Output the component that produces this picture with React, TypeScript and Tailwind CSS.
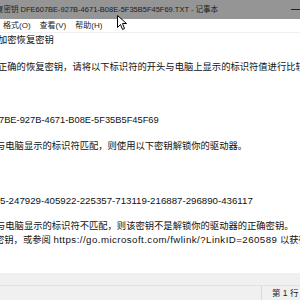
import React from "react";

const FONT = "font-['Liberation_Sans','Noto_Sans_CJK_SC',sans-serif]";

type Line = { text?: string; shift?: number; cls?: string };

// text as it shows in the cropped window (scrolled a bit to the right)
const LINES: Line[] = [
  { text: "加密恢复密钥", shift: -2 },
  {},
  { text: "正确的恢复密钥，请将以下标识符的开头与电脑上显示的标识符值进行比较。", shift: -2 },
  {},
  {},
  {},
  { text: "7BE-927B-4671-B08E-5F35B5F45F69", shift: -1, cls: "text-[9.3px]" },
  {},
  { text: "与电脑显示的标识符匹配，则使用以下密钥解锁你的驱动器。", shift: -4 },
  {},
  {},
  {},
  { text: "5-247929-405922-225357-713119-216887-296890-436117", shift: 0, cls: "text-[9.7px]" },
  {},
  { text: "与电脑显示的标识符不匹配，则该密钥不是解锁你的驱动器的正确密钥。", shift: -4 },
];

function Cursor() {
  return (
    <svg className="absolute left-[117px] top-[15px]" width="11" height="16" viewBox="0 0 11 16">
      <path d="M0.5 0.5 L0.5 12.5 L3.5 9.5 L5.5 14.5 L7.5 13.5 L5.5 8.5 L9.5 8.5 Z" fill="#fff" stroke="#000" strokeWidth="1" />
    </svg>
  );
}

export default function App() {
  return (
    <div className={`relative w-[300px] h-[300px] overflow-hidden bg-white flex flex-col ${FONT}`}>
      {/* title bar */}
      <div className="h-[19px] shrink-0 bg-[#959595] flex items-center justify-between">
        <span className="ml-[-4px] whitespace-nowrap text-[7.5px] text-[#1b1b1b]">
          复密钥 DFE607BE-927B-4671-B08E-5F35B5F45F69.TXT - 记事本
        </span>
        <span className="mr-[-2px] w-[11px] h-px bg-[#222]" />
      </div>

      {/* menu */}
      <div className="h-[14px] shrink-0 flex items-center gap-[9px] pl-[3px] text-[8px] text-[#1b1b1b] border-b border-[#f0f0f0]">
        <span>格式(O)</span>
        <span>查看(V)</span>
        <span>帮助(H)</span>
      </div>

      {/* text */}
      <div className="flex-1 overflow-hidden pt-px text-[9.3px] leading-[13.3px] text-[#111] whitespace-nowrap">
        {LINES.map((l, i) => (
          <div key={i} className={`h-[13.3px] ${l.cls ?? ""}`} style={{ marginLeft: l.shift ?? 0 }}>
            {l.text}
          </div>
        ))}
        <div className="h-[13.3px] ml-[-5px]">
          密钥，或参阅{" "}
          <span className="text-[9.7px] tracking-[0.45px]">https://go.microsoft.com/fwlink/?LinkID=260589</span> 以获得其他帮助。
        </div>
      </div>

      {/* horizontal scrollbar */}
      <div className="h-[12px] shrink-0 bg-[#f0f0f0]" />

      {/* status bar */}
      <div className="h-[15px] shrink-0 bg-[#f0f0f0] border-t border-[#e2e2e2] flex justify-end">
        <div className="w-[39px] border-l border-[#d9d9d9] pl-[10px] flex items-center text-[8.5px] text-[#1b1b1b] whitespace-nowrap">
          第 1 行
        </div>
      </div>

      <Cursor />
    </div>
  );
}
